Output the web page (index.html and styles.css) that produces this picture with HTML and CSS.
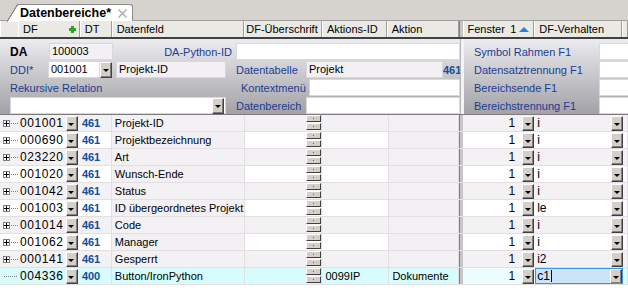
FILE: index.html
```html
<html>
	<head>
		<title>Datenbereiche</title>
		<link rel="stylesheet" href="styles.css">
	</head>
	<body>
		<div class="tabstrip">
			<div class="tab">
				<span class="tabtext">Datenbereiche*</span>
				<svg class="tabclose" width="9" height="9" viewBox="0 0 9 9"><path d="M0.5 0.5 L8.5 8.5 M8.5 0.5 L0.5 8.5" stroke="#a8a8a8" stroke-width="1.3" fill="none"/></svg>
			</div>
		</div>
		<div class="head">
			<div class="hc c0"></div>
			<div class="hc cdf">DF <span class="plus"></span></div>
			<div class="hc cdt">DT</div>
			<div class="hc cfeld">Datenfeld</div>
			<div class="hc cueb">DF-Überschrift</div>
			<div class="hc caid">Aktions-ID</div>
			<div class="hc cakt">Aktion</div>
			<div class="split"></div>
			<div class="hc cfen">Fenster <span class="one">1</span><span class="sortup"></span></div>
			<div class="hc cverh">DF-Verhalten</div>
			<div class="hc clast">Sy</div>
		</div>
		<div class="form">
			<div class="fleft">
				<div class="fline">
					<span class="lbl lbl-da">DA</span>
					<span class="inp ro w64">100003</span>
					<span class="lbl lbl-py">DA-Python-ID</span>
					<span class="inp w224"></span>
				</div>
				<div class="fline">
					<span class="lbl lbl-ddi">DDI*</span>
					<span class="inp w52">001001</span><span class="drop big"></span>
					<span class="inp ro w110 ml4">Projekt-ID</span>
					<span class="lbl lbl-r">Datentabelle</span>
					<span class="inp ro w137">Projekt</span>
					<span class="num">461</span>
				</div>
				<div class="fline">
					<span class="lbl lbl-rek">Rekursive Relation</span>
					<span class="lbl lbl-r">Kontextmenü</span>
					<span class="inp w154"></span>
				</div>
				<div class="fline">
					<span class="inp sel"><span class="drop big"></span></span>
					<span class="lbl lbl-r">Datenbereich</span>
					<span class="inp w154"></span>
				</div>
			</div>
			<div class="split light"></div>
			<div class="fright">
				<div class="fline"><span class="lbl lbl-f">Symbol Rahmen F1</span><span class="inp wr"></span></div>
				<div class="fline"><span class="lbl lbl-f">Datensatztrennung F1</span><span class="inp wr"></span></div>
				<div class="fline"><span class="lbl lbl-f">Bereichsende F1</span><span class="inp wr"></span></div>
				<div class="fline"><span class="lbl lbl-f">Bereichstrennung F1</span><span class="inp wr"></span></div>
			</div>
		</div>
		<div class="rows" id="rows"></div>
		<script>
		var data = [
			["001001","461","Projekt-ID","","","","1","i"],
			["000690","461","Projektbezeichnung","","","","1","i"],
			["023220","461","Art","","","","1","i"],
			["001020","461","Wunsch-Ende","","","","1","i"],
			["001042","461","Status","","","","1","i"],
			["001003","461","ID übergeordnetes Projekt","","","","1","le"],
			["001014","461","Code","","","","1","i"],
			["001062","461","Manager","","","","1","i"],
			["000141","461","Gesperrt","","","","1","i2"],
			["004336","400","Button/IronPython","","0099IP","Dokumente","1","c1"]
		];
		var html = "";
		for(var x = 0; x < data.length; x++)
		{
			var d = data[x];
			var cls = "row";
			if(x % 2 == 0)
				cls += " odd";
			if(x == data.length-1)
				cls += " cur";
			var tree = (x == data.length-1) ? "<span class='dots long'></span>" : "<span class='pbox'></span><span class='dots'></span>";
			var edit = (x == data.length-1) ? "<span class='caret'></span>" : "";
			html += "<div class='"+cls+"'>"
				+"<div class='c c0'>"+tree+"</div>"
				+"<div class='c cdf'><span class='t'>"+d[0]+"</span><span class='drop'></span></div>"
				+"<div class='c cdt num'>"+d[1]+"</div>"
				+"<div class='c cfeld ro'>"+d[2]+"</div>"
				+"<div class='c cueb'>"+d[3]+"<span class='stack'><span class='mini'></span><span class='mini'></span></span></div>"
				+"<div class='c caid'>"+d[4]+"</div>"
				+"<div class='c cakt ro'>"+d[5]+"</div>"
				+"<div class='split'></div>"
				+"<div class='c cfen'><span class='t'>"+d[6]+"</span><span class='drop'></span></div>"
				+"<div class='c cverh"+(x == data.length-1 ? " edit" : "")+"'><span class='t'>"+d[7]+edit+"</span><span class='drop'></span></div>"
				+"<div class='c clast'></div>"
				+"</div>";
		}
		document.getElementById("rows").innerHTML = html;
		</script>
	</body>
</html>
```

FILE: styles.css
```css
body{
	margin: 0;
	width: 628px;
	height: 290px;
	overflow: hidden;
	background-color: #d4d0c8;
	font-family: "Liberation Sans", Arial, sans-serif;
	font-size: 11px;
	color: #000000;
}
.tabstrip{
	height: 21px;
	background-color: #d6d3ce;
	display: flex;
	align-items: flex-end;
	box-sizing: border-box;
	border-bottom: 1px solid #a0a0a0;
}
.tab{
	position: relative;
	margin-left: 18px;
	height: 17px;
	width: 115px;
	box-sizing: border-box;
	background-color: #ffffff;
	border: 1px solid #8c8c8c;
	border-left: none;
	border-bottom: none;
	border-radius: 0 3px 0 0;
	display: flex;
	align-items: center;
	white-space: nowrap;
	margin-bottom: -1px;
}
.tab:before{
	content: "";
	position: absolute;
	left: -11px;
	top: -1px;
	width: 11px;
	height: 18px;
	background: linear-gradient(to top left, #ffffff 46%, #8c8c8c 48%, #8c8c8c 53%, transparent 55%);
}
.tabtext{
	font-size: 12.5px;
	font-weight: bold;
	padding-left: 2px;
}
.tabclose{
	margin-left: 7px;
	margin-top: 1px;
}
.head{
	display: flex;
	height: 16px;
	background-color: #ebe9e4;
	border-bottom: 2px solid #404040;
}
.hc{
	box-sizing: border-box;
	height: 16px;
	padding-left: 4px;
	border-right: 1px solid #a09c98;
	border-left: 1px solid #ffffff;
	white-space: nowrap;
	overflow: hidden;
	font-size: 11px;
	display: flex;
	align-items: center;
}
.hc.cueb{
	padding-left: 1px;
}
.plus{
	display: inline-block;
	width: 7px;
	height: 7px;
	margin-left: auto;
	margin-right: 3px;
	background:
		linear-gradient(#26a826, #26a826) center/7px 3px no-repeat,
		linear-gradient(#26a826, #26a826) center/3px 7px no-repeat;
}
.one{
	margin-left: auto;
	margin-right: 3px;
}
.sortup{
	width: 0;
	height: 0;
	border-left: 5px solid transparent;
	border-right: 5px solid transparent;
	border-bottom: 5px solid #2a7ed8;
	margin-right: 4px;
}
.c0{ width: 18px; }
.cdf{ width: 62px; }
.cdt{ width: 32px; }
.cfeld{ width: 133px; }
.cueb{ width: 78px; }
.caid{ width: 65px; }
.cakt{ width: 72px; }
.cfen{ width: 72px; }
.cverh{ width: 88px; }
.clast{ width: 5px; }
.split{
	width: 3px;
	flex: none;
	background-color: #c8c4c8;
	border-left: 1px solid #808080;
}
.split.light{
	background-color: #f4f4f6;
	border-left: 1px solid #b8b8bc;
}
.form{
	display: flex;
	height: 75px;
	background: linear-gradient(#ecebef, #a2a2a6);
	border-bottom: 1px solid #7c7c80;
}
.fleft{
	width: 460px;
	padding-top: 4px;
	box-sizing: border-box;
}
.fright{
	flex: 1;
	padding-top: 4px;
}
.fline{
	display: flex;
	align-items: center;
	height: 17px;
	margin-bottom: 1px;
	white-space: nowrap;
}
.lbl{
	color: #1a3c94;
	font-size: 11px;
}
.lbl-da{
	color: #000000;
	font-weight: bold;
	width: 39px;
	padding-left: 10px;
	font-size: 12px;
}
.lbl-ddi{
	width: 38px;
	padding-left: 10px;
}
.lbl-py{
	width: 119px;
	text-align: right;
	padding-right: 4px;
}
.lbl-rek{
	width: 226px;
	padding-left: 10px;
}
.lbl-r{
	width: 70px;
	padding-left: 10px;
}
.lbl-f{
	width: 125px;
	padding-left: 10px;
}
.inp{
	box-sizing: border-box;
	height: 17px;
	background-color: #ffffff;
	border: 1px solid #d8d8dc;
	padding-left: 2px;
	font-size: 11px;
	line-height: 15px;
	display: inline-block;
}
.inp.ro{
	background-color: #f2f0f2;
}
.w64{ width: 64px; }
.w224{ width: 224px; }
.w52{ width: 52px; }
.w110{ width: 110px; }
.w137{ width: 137px; }
.w154{ width: 154px; }
.wr{ width: 35px; }
.ml4{ margin-left: 4px; }
.sel{
	width: 216px;
	margin-left: 10px;
	display: flex;
	justify-content: flex-end;
	align-items: center;
	padding-right: 1px;
}
.num{
	color: #0e4fa0;
	font-weight: bold;
	font-size: 11px;
}
.form .num{
	width: 17px;
	text-align: right;
}
.drop{
	display: inline-flex;
	flex: none;
	width: 12px;
	height: 15px;
	box-sizing: border-box;
	background-color: #d4d0c8;
	border: 1px solid;
	border-color: #ffffff #404040 #404040 #ffffff;
	box-shadow: inset -1px -1px #808080;
	align-items: center;
	justify-content: center;
}
.drop:after{
	content: "";
	border-left: 3px solid transparent;
	border-right: 3px solid transparent;
	border-top: 3px solid #000000;
	margin-top: 2px;
	margin-right: 1px;
}
.drop.big{
	height: 16px;
}
.rows{
	background-color: #ffffff;
	height: 175px;
}
.row{
	display: flex;
	height: 16px;
	border-bottom: 1px solid #e2dee2;
	background-color: #ffffff;
}
.row.odd{
	background-color: #f4f1f4;
}
.row.cur{
	background-color: #d8fbfb;
}
.c{
	box-sizing: border-box;
	height: 16px;
	border-right: 1px solid #e2dee2;
	white-space: nowrap;
	overflow: hidden;
	font-size: 11px;
	display: flex;
	align-items: center;
}
.c.ro{
	background-color: #f2f0f2;
	padding-left: 3px;
}
.row.odd .c.ro{
	background-color: #f4f1f4;
}
.row.cur .c.ro{
	background-color: #d8fbfb;
}
.c0{
	padding-left: 3px;
	border-right: none;
}
.row .cdf{
	padding-left: 2px;
	border-right: none;
}
.row .cdf .t{
	width: 46px;
	font-size: 12px;
	letter-spacing: 0.6px;
}
.row .cdt{
	padding-left: 2px;
}
.row .caid{
	padding-left: 3px;
	width: 67px;
}
.row .cakt{
	width: 70px;
}
.row .cueb{
	justify-content: flex-end;
}
.row .cfen .t{
	width: 59px;
	text-align: right;
	padding-right: 7px;
	box-sizing: border-box;
	font-size: 12px;
}
.row .cfen{
	border-right: none;
}
.row.cur .cfen{
	background-color: #ecfdfd;
}
.row .cverh{
	padding-left: 2px;
	border-right: none;
}
.row .cverh .t{
	width: 76px;
	font-size: 12px;
	display: flex;
	align-items: center;
}
.row .cverh.edit{
	background-color: #cce4f7;
	border: 1px solid #3c94e0;
	padding-left: 1px;
}
.caret{
	width: 1px;
	height: 12px;
	margin-left: 1px;
	background-color: #000000;
}
.pbox{
	width: 7px;
	height: 7px;
	box-sizing: border-box;
	border: 1px solid #808080;
	background:
		linear-gradient(#000000, #000000) center/5px 1px no-repeat,
		linear-gradient(#000000, #000000) center/1px 5px no-repeat,
		#ffffff;
}
.dots{
	width: 7px;
	border-top: 1px dotted #808080;
	margin-left: 1px;
}
.dots.long{
	width: 13px;
	margin-left: 1px;
}
.stack{
	display: flex;
	flex-direction: column;
	width: 15px;
}
.mini{
	height: 7px;
	box-sizing: border-box;
	background:
		linear-gradient(#606060, #606060) center/1px 1px no-repeat,
		#d4d0c8;
	border: 1px solid;
	border-color: #ffffff #404040 #404040 #ffffff;
	margin-bottom: 1px;
}
```
